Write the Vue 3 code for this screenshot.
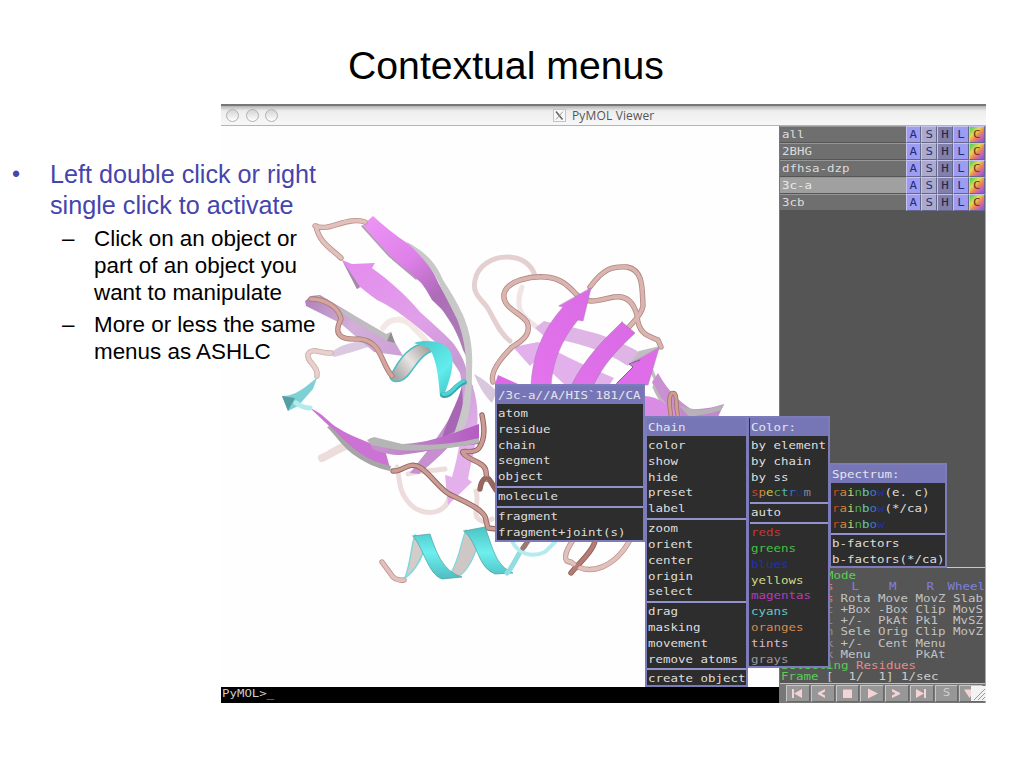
<script setup>
const rainbow = ['#c8452e', '#cf8a3c', '#d2ce62', '#4fae4a', '#5fc7c4', '#3f78c4', '#2330a8']
const tint = (word, colors) => word.split('').map((t, i) => ({ t, c: colors[i] }))
const plain = (...words) => words.map((w) => [{ t: w }])

const menus = [
  {
    id: 'atom',
    title: '/3c-a//A/HIS`181/CA',
    groups: [
      plain('atom', 'residue', 'chain', 'segment', 'object'),
      plain('molecule'),
      plain('fragment', 'fragment+joint(s)'),
    ],
  },
  {
    id: 'chain',
    title: 'Chain',
    groups: [
      plain('color', 'show', 'hide', 'preset', 'label'),
      plain('zoom', 'orient', 'center', 'origin', 'select'),
      plain('drag', 'masking', 'movement', 'remove atoms'),
      plain('create object'),
    ],
  },
  {
    id: 'color',
    title: 'Color:',
    groups: [
      [
        ...plain('by element', 'by chain', 'by ss'),
        tint('spectrum', ['#c8452e', '#cf8a3c', '#c9c452', '#4fae4a', '#4fb7b4', '#3f6fc0', '#2028a0', '#858590']),
      ],
      plain('auto'),
      [
        [{ t: 'reds', c: '#c8382c' }],
        [{ t: 'greens', c: '#46c046' }],
        [{ t: 'blues', c: '#2230b4' }],
        [{ t: 'yellows', c: '#d8d882' }],
        [{ t: 'magentas', c: '#b43cba' }],
        [{ t: 'cyans', c: '#62c8ca' }],
        [{ t: 'oranges', c: '#d08a50' }],
        [{ t: 'tints', c: '#dcb8cc' }],
        [{ t: 'grays', c: '#98989a' }],
      ],
    ],
  },
  {
    id: 'spectrum',
    title: 'Spectrum:',
    groups: [
      [
        [...tint('rainbow', rainbow), { t: '(e. c)' }],
        [...tint('rainbow', rainbow), { t: '(*/ca)' }],
        tint('rainbow', rainbow),
      ],
      plain('b-factors', 'b-factors(*/ca)'),
    ],
  },
]

const objects = ['all', '2BHG', 'dfhsa-dzp', '3c-a', '3cb']
const actions = ['A', 'S', 'H', 'L', 'C']

const mouseRows = [
  ['Keys', 'Rota', 'Move', 'MovZ', 'Slab'],
  ['Shft', '+Box', '-Box', 'Clip', 'MovS'],
  ['Ctrl', '+/-', 'PkAt', 'Pk1', 'MvSZ'],
  ['CtSh', 'Sele', 'Orig', 'Clip', 'MovZ'],
  ['SnglClk', '+/-', 'Cent', 'Menu', ''],
  ['DblClk', 'Menu', '', 'PkAt', ''],
]
const frameText = '[  1/  1] 1/sec'

const controls = [
  'M3 2h2v9H3zM13 2v9L5 6.5z',
  'M11 2v2.5L7.5 6.5 11 8.500V11L4 7.300V5.700z',
  'M4 2.500h9v8.500H4z',
  'M4 1.500v10L14 6.500z',
  'M4 2v2.500L7.500 6.500 4 8.500V11L12 7.300V5.700z',
  'M3 2v9l8-4.500zM11 2h2v9h-2z',
  '',
  'M1 2.500h11L6.500 11z',
]
</script>

<template>
  <main class="slide">
    <h1>Contextual menus</h1>

    <section class="window">
      <header class="titlebar">
        <div class="lights"><i></i><i></i><i></i></div>
        <div class="caption">
          <svg width="13" height="13" viewBox="0 0 13 13">
            <rect x=".5" y=".5" width="12" height="12" fill="#f8f8f8" stroke="#c4c4c4" />
            <path d="M3 2.500 9.500 10.500" stroke="#666" stroke-width="1.600" />
            <path d="M10 2.500 3 10.500" stroke="#888" stroke-width=".8" />
          </svg>
          <span>PyMOL Viewer</span>
        </div>
      </header>

      <div class="body">
        <div class="stage">
          <div class="viewport">
            <svg width="559" height="561" viewBox="221 126 559 561" fill="none" stroke-linecap="round" stroke-linejoin="round">
              <defs>
                <linearGradient id="gA" x1="370" y1="220" x2="465" y2="350" gradientUnits="userSpaceOnUse">
                  <stop offset="0" stop-color="#ec93f4" /><stop offset=".35" stop-color="#dd80e8" /><stop offset=".62" stop-color="#ad6cb8" /><stop offset="1" stop-color="#a981b3" />
                </linearGradient>
                <linearGradient id="gB" x1="345" y1="265" x2="465" y2="450" gradientUnits="userSpaceOnUse">
                  <stop offset="0" stop-color="#e58cef" /><stop offset=".4" stop-color="#dfa0e8" /><stop offset=".65" stop-color="#c79bd2" /><stop offset="1" stop-color="#e3b0ec" />
                </linearGradient>
                <linearGradient id="gC" x1="305" y1="302" x2="400" y2="350" gradientUnits="userSpaceOnUse">
                  <stop offset="0" stop-color="#b183bb" /><stop offset=".5" stop-color="#d3afd9" /><stop offset="1" stop-color="#cda2d6" />
                </linearGradient>
                <linearGradient id="gM" x1="530" y1="383" x2="640" y2="300" gradientUnits="userSpaceOnUse">
                  <stop offset="0" stop-color="#e374ee" /><stop offset="1" stop-color="#d769e2" />
                </linearGradient>
                <linearGradient id="gH" x1="395" y1="375" x2="430" y2="345" gradientUnits="userSpaceOnUse">
                  <stop offset="0" stop-color="#a9a9a9" /><stop offset=".45" stop-color="#e9e4e4" /><stop offset="1" stop-color="#9c9594" />
                </linearGradient>
                <linearGradient id="gY" x1="420" y1="345" x2="465" y2="395" gradientUnits="userSpaceOnUse">
                  <stop offset="0" stop-color="#4ccfd2" /><stop offset=".5" stop-color="#63ecec" /><stop offset="1" stop-color="#35b6ba" />
                </linearGradient>
                <linearGradient id="gZ" x1="0" y1="527" x2="0" y2="578" gradientUnits="userSpaceOnUse">
                  <stop offset="0" stop-color="#4cc3c5" /><stop offset=".5" stop-color="#6eeeee" /><stop offset="1" stop-color="#4fbfc2" />
                </linearGradient>
                <linearGradient id="gG" x1="385" y1="0" x2="478" y2="0" gradientUnits="userSpaceOnUse">
                  <stop offset="0" stop-color="#c490cc" /><stop offset="1" stop-color="#b45cc2" />
                </linearGradient>
              </defs>

              <!-- distant loops -->
              <g stroke="#ecdcdc" stroke-width="5">
                <path d="M510 341C499 333 494 318 487 307C480 298 472 293 475 280C478 265 493 257 507 257C522 257 532 265 535 276" stroke="#e4d0d0" />
                <path d="M522 287C518 297 517 309 524 316C530 323 535 326 540 329" stroke="#f0e4e4" />
                <path d="M397 467C400 480 399 490 406 499C413 510 426 515 438 511C445 508 448 504 449 498" />
                <path d="M322 458C330 455 340 446 353 444" stroke-width="8" />
                <path d="M383 328C390 317 404 317 413 327C419 333 423 337 428 343" stroke-width="6" stroke="#f3e8e5" />
                <path d="M476 491C480 503 471 514 480 520C485 523 489 521 492 519" />
                <path d="M408 474C417 471 430 471 445 469" />
              </g>
              <path d="M330 353C342 344 353 341 372 341L383 345C367 345 350 354 334 357Z" fill="#dac9e0" />
              <path d="M317 376C319 366 306 362 308 354C312 347 322 354 331 353" stroke="#c9aeab" stroke-width="5.500" />
              <path d="M317 376C319 366 306 362 308 354C312 347 322 354 331 353" stroke="#e8d0cd" stroke-width="3.800" />

              <!-- left barrel strands -->
              <path d="M305 301L311 296L320 295L391 337L392 337L403 356L374 352L340 323L306 306Z" fill="url(#gC)" />
              <path d="M317 295L386 334L391 332L395 343L386 340L318 299Z" fill="#bdbdbd" />
              <path d="M391 332L395 343L387 341Z" fill="#8f8f92" />

              <path d="M463 378C460 407 443 432 410 473L419 474C447 451 463 434 475 405Z" fill="#c68fd0" />
              <path d="M463 382C460 398 450 413 442 438L458 430C469 417 473 402 473 386Z" fill="#a867b4" />
              <path d="M342 260L352 264L375 263L372 268C390 281 407 296 420 312C432 323 444 333 453 343C461 354 466 364 467 373C476 390 479 408 477 430C476 446 471 462 468 479L472 482L448 505L445 475L452 477C462 444 466 402 460 373C451 358 443 348 433 340C412 322 396 309 377 300C370 295 363 289 360 287L357 289Z" fill="url(#gB)" />
              <path d="M342 260L357 289L360 287L348 269Z" fill="#9d8ca3" />
              <path d="M362 226L373 216C383 225 395 235 407 243C420 251 430 264 437 280C441 289 448 298 453 308C460 322 467 340 468 360L463 350C459 337 453 325 447 317C442 308 438 306 432 300C427 291 423 284 418 280C410 274 401 267 393 260C382 248 372 237 362 226Z" fill="url(#gA)" />
              <path d="M362 226L389 256L416 279" stroke="#a8a1aa" stroke-width="1.500" />
              <path d="M405 241C423 250 436 262 443 280C450 291 456 300 463 315C471 334 473 351 472 370C472 388 471 404 468 418C465 430 456 440 449 448L457 425C462 410 465 397 466 377C467 355 464 337 457 319C451 307 447 299 442 290C438 280 431 264 405 241Z" fill="#c8c8c8" />
              <path d="M474 374C484 379 491 386 497 391L492 403C486 397 480 389 474 374Z" fill="#d9c7dd" />

              <path d="M310 408C323 413 330 424 338 428C353 438 371 442 385 450L390 468L362 458C348 445 334 431 327 424Z" fill="#cb72d4" />
              <path d="M330 426C342 438 351 447 361 454C371 460 379 463 391 466L390 471C376 468 366 463 357 457C344 449 336 436 327 427Z" fill="#a6a6a6" />
              <path d="M370 438L401 444C432 443 453 433 479 424V444C452 446 430 451 401 455C390 455 384 453 372 449Z" fill="url(#gG)" />
              <path d="M367 440L374 437L402 444C433 446 454 444 479 438V443C448 449 423 452 398 450L371 445Z" fill="#b5b5b5" />

              <path d="M282 396C299 396 310 382 317 378L313 389L298 406L288 411Z" fill="#7dd1d4" />
              <path d="M282 396L295 398L288 411Z" fill="#579ea2" />
              <path d="M296 403Q303 408 310 408" stroke="#b4eaec" stroke-width="5" />

              <!-- upper helix -->
              <path d="M390 377C399 359 410 343 429 343C436 345 434 351 428 353C415 360 411 378 400 381C395 382 391 381 390 377Z" fill="url(#gH)" stroke="#47bfc3" stroke-width="1.500" />
              <path d="M414 343C426 339 445 341 450 351C457 362 448 384 445 393L440 396C439 382 437 359 429 348Z" fill="url(#gY)" />
              <path d="M443 395C451 397 455 385 464 382" stroke="#30a6ab" stroke-width="5.500" />
              <path d="M443 394C451 396 455 384 464 381" stroke="#4fd2d4" stroke-width="3.400" />

              <!-- right domain strands -->
              <path d="M535 328L544 321C570 328 601 330 639 352L628 366C602 349 575 342 545 337Z" fill="#dfb5e6" />
              <path d="M513 347L538 342C565 356 588 367 614 378L610 384H564L537 359L530 366Z" fill="#e2b0eb" />
              <path d="M639 351L660 346L651 364L662 392L660 391L644 361L630 363Z" fill="#c4bcc5" />
              <path d="M652 382C657 396 667 407 681 417L704 416C684 407 669 393 658 373Z" fill="#c990d2" />
              <path d="M654 387C659 400 666 407 671 415" stroke="#b9b9b9" stroke-width="3" />
              <path d="M645 396C660 397 671 407 684 417H645Z" fill="#d98ce3" />
              <path d="M680 408C696 411 712 408 724 404L718 417H681Z" fill="#c28aca" />
              <path d="M679 405C693 411 708 411 717 406L724 405L721 410L711 413L689 417Z" fill="#b9b1ba" />
              <path d="M495 384L498 375L518 384Z" fill="#dc68e6" />

              <g stroke="#b08782" stroke-width="5.400">
                <path d="M493 382C490 373 499 360 512 347C526 339 531 332 527 322C520 312 502 308 504 294C507 280 532 276 545 277C562 278 569 287 577 295C588 306 602 299 614 297C628 295 634 304 637 315C638 334 648 336 658 340L661 347" />
                <path d="M590 287C603 269 612 266 627 267C644 270 642 290 643 306C641 316 634 321 629 327" />
              </g>
              <g stroke="#dab5b0" stroke-width="3.800">
                <path d="M493 382C490 373 499 360 512 347C526 339 531 332 527 322C520 312 502 308 504 294C507 280 532 276 545 277C562 278 569 287 577 295C588 306 602 299 614 297C628 295 634 304 637 315C638 334 648 336 658 340L661 347" />
                <path d="M590 287C603 269 612 266 627 267C644 270 642 290 643 306C641 316 634 321 629 327" />
              </g>

              <path d="M591 288L583 321L578 320C566 334 553 356 551 386H531C533 351 544 329 563 307L559 306Z" fill="url(#gM)" stroke="#b27eb9" stroke-width=".6" />
              <path d="M622 322L635 333C618 349 604 363 593 386H571C584 360 601 342 622 322Z" fill="url(#gM)" stroke="#9f7ba4" stroke-width=".6" />
              <path d="M659 348L648 385H615L633 367L630 364Z" fill="#df6ce9" stroke="#a884ae" stroke-width=".6" />
              <path d="M617 383L633 367L629 364L640 360" stroke="#77667b" stroke-width="1" />

              <path d="M671 416C668 398 670 393 673 393C678 393 675 405 678 416" stroke="#9b6f67" stroke-width="4.500" />
              <path d="M671 416C668 398 670 393 673 393C678 393 675 405 678 416" stroke="#cf9d91" stroke-width="3" />

              <!-- near coils -->
              <g stroke="#8c6660" stroke-width="5.400">
                <path d="M311 299C326 299 339 308 341 319C333 335 340 340 359 339C382 341 380 362 392 376" stroke="#a88079" />
                <path d="M393 471C403 472 409 460 421 468C432 476 438 487 449 494C461 500 487 510 486 521L488 528L496 529" />
                <path d="M482 415C484 425 486 438 479 448C474 455 460 449 463 453C467 460 486 462 486 472L487 479" />
                <path d="M480 489C481 481 486 473 491 482L496 490" />
              </g>
              <g stroke="#cb9b94" stroke-width="3.600">
                <path d="M311 299C326 299 339 308 341 319C333 335 340 340 359 339C382 341 380 362 392 376" stroke="#d6a69e" />
                <path d="M393 471C403 472 409 460 421 468C432 476 438 487 449 494C461 500 487 510 486 521L488 528L496 529" />
                <path d="M482 415C484 425 486 438 479 448C474 455 460 449 463 453C467 460 486 462 486 472L487 479" />
                <path d="M480 489C481 481 486 473 491 482L496 490" stroke="#99675f" />
              </g>
              <g stroke="#bb928d" stroke-width="5.400">
                <path d="M315 226C331 232 346 216 365 222M316 226C319 243 332 249 341 258" />
                <path d="M573 540C565 552 562 562 571 562C589 578 615 567 630 540" />
                <path d="M595 541C593 551 580 562 571 573" stroke="#8b5f58" />
                <path d="M382 562L393 577Q398 581 404 580" />
              </g>
              <g stroke="#e2c1bd" stroke-width="3.800">
                <path d="M315 226C331 232 346 216 365 222M316 226C319 243 332 249 341 258" />
                <path d="M573 540C565 552 562 562 571 562C589 578 615 567 630 540" />
                <path d="M595 541C593 551 580 562 571 573" stroke="#b37c74" />
                <path d="M382 562L393 577Q398 581 404 580" />
              </g>

              <!-- lower helix -->
              <path d="M405 578C411 562 411 546 415 535L425 546C422 559 414 572 405 578Z" fill="#d5cbc9" stroke="#79d9db" stroke-width="1.500" />
              <path d="M449 576C460 560 461 540 466 530L477 547C472 563 464 575 457 577Z" fill="#cfc7c5" stroke="#79d9db" stroke-width="1.200" />
              <path d="M413 536L430 534C436 551 442 571 462 577L442 579C428 574 424 549 413 536Z" fill="url(#gZ)" stroke="#469fa2" stroke-width=".7" />
              <path d="M464 531L485 527C493 548 495 565 513 573L495 574C477 567 479 544 464 531Z" fill="url(#gZ)" stroke="#469fa2" stroke-width=".7" />
              <path d="M507 573C514 566 518 552 525 546" stroke="#91dde0" stroke-width="5" />
              <path d="M512 541C518 554 532 558 545 552L556 541" stroke="#b5ebef" stroke-width="4" />
              <path d="M528 541L523 548" stroke="#9f7771" stroke-width="5" />
            </svg>
          </div>
          <div class="prompt"><span class="mono">PyMOL&gt;_</span></div>
        </div>

        <aside class="panel">
          <ul class="objects">
            <li v-for="name in objects" :key="name" :class="{ active: name === '3c-a' }">
              <span class="name"><span class="mono">{{ name }}</span></span>
              <b v-for="a in actions" :key="a" :class="'act-' + a"><span class="mono">{{ a }}</span></b>
            </li>
          </ul>
          <div class="mouse">
            <div class="line green"><span class="mono">Mouse Mode</span></div>
            <div class="line heads">
              <span class="mono pink">Buttons</span>
              <span class="mono">L</span><span class="mono">M</span><span class="mono">R</span><span class="mono">Wheel</span>
            </div>
            <div v-for="row in mouseRows" :key="row[0]" class="line cells">
              <span v-for="(cell, i) in row" :key="i" class="mono" :class="{ pink: cell === 'Keys' }">{{ cell }}</span>
            </div>
            <div class="line green"><span class="mono">Selecting <em>Residues</em></span></div>
            <div class="line green"><span class="mono">Frame <em class="count">{{ frameText }}</em></span></div>
          </div>
          <div class="controls">
            <div v-for="(d, i) in controls" :key="i" class="btn">
              <svg v-if="d" width="17" height="13" viewBox="0 0 17 13"><path :d="d" fill="#f3d3d3" /></svg>
              <span v-else class="mono">S</span>
            </div>
            <svg class="grip" width="15" height="15" viewBox="0 0 15 15">
              <path d="M0 0H15V15H0Z" fill="#f2f2f2" />
              <path d="M3 14 14 3M7 14l7-7M11 14l3-3" stroke="#999" />
            </svg>
          </div>
        </aside>
      </div>
    </section>

    <nav v-for="m in menus" :key="m.id" class="menu" :class="'menu-' + m.id">
      <header><span class="mono">{{ m.title }}</span></header>
      <ul v-for="(g, gi) in m.groups" :key="gi">
        <li v-for="(item, ii) in g" :key="ii"><span class="mono"><span v-for="(p, pi) in item" :key="pi" :style="{ color: p.c }">{{ p.t }}</span></span></li>
      </ul>
    </nav>

    <div class="bullets">
      <p class="lead"><i>•</i><span>Left double click or right<br />single click to activate</span></p>
      <p class="sub"><i>–</i><span>Click on an object or<br />part of an object you<br />want to manipulate</span></p>
      <p class="sub"><i>–</i><span>More or less the same<br />menus as ASHLC</span></p>
    </div>
  </main>
</template>

<style>
body { background: #fff; }
</style>

<style scoped>
.slide {
  position: relative;
  width: 1024px;
  height: 768px;
  overflow: hidden;
  background: #fff;
  font-family: "Liberation Sans", Arial, sans-serif;
}
h1 {
  margin: 0;
  height: 104px;
  padding: 43px 0 0 348px;
  box-sizing: border-box;
  font-size: 39.2px;
  line-height: 45px;
  font-weight: 400;
  color: #000;
  white-space: nowrap;
}
ul { margin: 0; padding: 0; list-style: none; }
.mono {
  display: inline-block;
  font-family: "DejaVu Sans Mono", "Liberation Mono", monospace;
  font-size: 12.46px;
  line-height: 14px;
  white-space: pre;
  transform: scaleY(.84);
}

.window { width: 765px; height: 599px; margin-left: 221px; display: flex; flex-direction: column; }
.titlebar {
  height: 22px;
  box-sizing: border-box;
  border-top: 2px solid #777;
  border-bottom: 1px solid #b4b4b4;
  background: linear-gradient(#b4b4b4, #eee 5px, #f7f7f7);
  display: flex;
  align-items: center;
}
.lights { display: flex; gap: 6.500px; padding-left: 5px; width: 327px; box-sizing: border-box; }
.lights i {
  width: 13px;
  height: 13px;
  box-sizing: border-box;
  border: 1.500px solid #b2b2b2;
  border-radius: 50%;
  background: linear-gradient(#d4d4d4, #fff);
}
.caption { display: flex; align-items: center; gap: 6px; padding-left: 5px; font: 12px/16px "Open Sans", "Noto Sans", sans-serif; letter-spacing: .15px; color: #555; }
.body { flex: 1; display: flex; min-height: 0; }
.stage { width: 559px; flex: none; display: flex; flex-direction: column; }
.viewport { height: 561px; background: #fefefe; }
.viewport svg { display: block; }
.prompt { flex: 1; background: #000; color: #ccc; padding-left: 1px; line-height: 12px; }
.prompt .mono { line-height: 12px; font-size: 12.400px; }

.panel {
  flex: 1;
  min-width: 0;
  box-sizing: border-box;
  margin-left: -1px;
  border-left: 1px solid #777;
  border-right: 1px solid #aaa;
  background: #555;
  display: flex;
  flex-direction: column;
}
.objects { height: 84px; display: flex; flex-direction: column; }
.objects li { flex: 1; display: flex; align-items: stretch; background: #6f6f6f; }
.name { flex: 1; border-top: 1px solid #969696; border-bottom: 1px solid #555; padding-left: 2px; color: #dcdcdc; line-height: 14px; }
.active .name { background: #a0a0a0; color: #e8e8e8; }
.name .mono, .objects b .mono { line-height: 15px; }
.objects b {
  width: 15.900px;
  box-sizing: border-box;
  border: 1px solid;
  border-color: #c4c4ee #66668c #66668c #c4c4ee;
  font-weight: 400;
  line-height: 14px;
  color: #2a2a78;
  padding-left: 3px;
}
.act-A, .act-L { background: #9c9cf2; }
.act-S { background: #aaaacb; }
.act-H { background: #8080aa; }
.objects .act-H { color: #26264a; }
.act-C { background: linear-gradient(135deg, #5fd05a 8%, #e4dc50 35%, #ee8a50 55%, #cc62b0 75%, #6565e0); }
.objects .act-C { color: #6c3426; }

.mouse { margin-top: 356.500px; height: 116px; border-top: 1.500px solid #c8c8c8; box-sizing: border-box; padding: 2.500px 0 0 1px; color: #c2c2c2; }
.line { height: 11.250px; display: flex; }
.line .mono { line-height: 12px; transform: scaleY(.78); }
.green { color: #57cf57; }
.green em { font-style: normal; color: #e58a8a; }
.green .count { color: #ccc; }
.heads { color: #8080d8; }
.heads .mono { width: 37.500px; flex: none; }
.heads .mono:first-child { width: 70.500px; }
.heads .mono:nth-child(4) { width: 21px; }
.line .pink { color: #e07f7f; }
.cells .mono { width: 37.500px; flex: none; }
.cells .mono:first-child { width: 52.500px; margin-right: 7px; text-align: right; color: #8c8ca8; }
.cells .mono.pink:first-child { color: #e07f7f; }

.controls { position: relative; flex: 1; display: flex; gap: 1px; padding: 1px 2px 1px 6px; background: #777; border-top: 1px solid #c0c0c0; }
.btn {
  flex: 1 1 0;
  min-width: 0;
  display: flex;
  align-items: center;
  justify-content: center;
  background: #979797;
  border: 1px solid;
  border-color: #c6c6c6 #686868 #686868 #c6c6c6;
  color: #d0d0d0;
}
.grip { position: absolute; right: -1px; bottom: 2px; }

.menu { position: absolute; box-sizing: border-box; background: #2d2d2d; border: 2px solid #7c7cba; color: #dedede; overflow: hidden; }
.menu header { height: 17.500px; background: #7676b6; color: #e4e4f0; padding: 2px 0 0 1px; box-sizing: border-box; line-height: 14px; margin-bottom: 2.400px; }
.menu li { height: 15.830px; padding-left: 1px; line-height: 14px; }
.menu ul + ul { border-top: 2px solid #9292cc; margin-top: 1px; padding-top: 1px; }
.menu-atom { left: 495px; top: 384px; width: 150px; height: 158px; }
.menu-chain { left: 645px; top: 416px; width: 103px; height: 271px; }
.menu-color { left: 748px; top: 416px; width: 82px; height: 252px; border-left-width: 1px; padding-left: 1px; }
.menu-spectrum { left: 830px; top: 463px; width: 117px; height: 105px; border-left-width: 1px; }

.bullets { position: absolute; left: 0; top: 159px; width: 330px; white-space: nowrap; }
.bullets p { margin: 0; display: flex; }
.bullets i { font-style: normal; flex: none; }
.lead { color: #4545ac; font-size: 25.200px; line-height: 30.500px; }
.lead i { width: 38px; padding-left: 12px; font-size: 23px; }
.sub { color: #000; font-size: 22.400px; line-height: 27.200px; padding-top: 4.500px; }
.sub i { width: 32px; padding-left: 62px; }
</style>
